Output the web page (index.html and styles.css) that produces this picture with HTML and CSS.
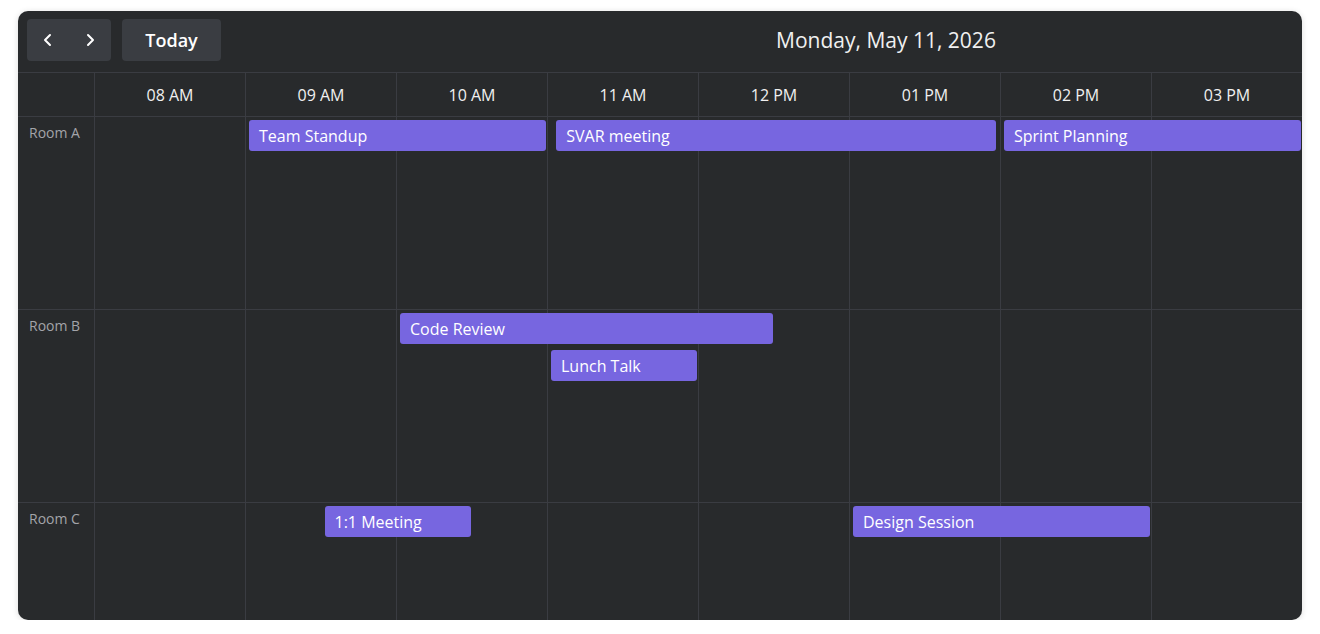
FILE: index.html
```html
<!DOCTYPE html>
<html lang="en">
<head>
  <meta charset="UTF-8">
  <meta name="viewport" content="width=device-width, initial-scale=1.0">
  <title>Room Timeline</title>
  <link rel="stylesheet" href="styles.css">
</head>
<body>
  <section class="scheduler">
    <div class="toolbar">
      <div class="nav-group">
        <button class="nav-btn" title="Previous day">
          <svg width="12" height="14" viewBox="0 0 12 14"><path d="M8 2 L3 7 L8 12" fill="none" stroke="#fff" stroke-width="2" stroke-linecap="round" stroke-linejoin="round"/></svg>
        </button>
        <button class="nav-btn" title="Next day">
          <svg width="12" height="14" viewBox="0 0 12 14"><path d="M4 2 L9 7 L4 12" fill="none" stroke="#fff" stroke-width="2" stroke-linecap="round" stroke-linejoin="round"/></svg>
        </button>
      </div>
      <button class="today-btn">Today</button>
      <div class="date-title">Monday, May 11, 2026</div>
    </div>

    <div class="timeline">
      <div class="head-row">
        <div class="corner"></div>
        <div class="hour">08 AM</div>
        <div class="hour">09 AM</div>
        <div class="hour">10 AM</div>
        <div class="hour">11 AM</div>
        <div class="hour">12 PM</div>
        <div class="hour">01 PM</div>
        <div class="hour">02 PM</div>
        <div class="hour">03 PM</div>
      </div>

      <div class="body">
        <!-- start / end are hours of the day, lane is the stacking row -->
        <div class="room-row">
          <div class="room-name">Room A</div>
          <div class="cells">
            <div class="cell"></div><div class="cell"></div><div class="cell"></div><div class="cell"></div>
            <div class="cell"></div><div class="cell"></div><div class="cell"></div><div class="cell"></div>
            <div class="event" style="--start:9; --end:11; --lane:0">Team Standup</div>
            <div class="event" style="--start:11.035; --end:13.98; --lane:0">SVAR meeting</div>
            <div class="event" style="--start:14; --end:16; --lane:0">Sprint Planning</div>
          </div>
        </div>

        <div class="room-row">
          <div class="room-name">Room B</div>
          <div class="cells">
            <div class="cell"></div><div class="cell"></div><div class="cell"></div><div class="cell"></div>
            <div class="cell"></div><div class="cell"></div><div class="cell"></div><div class="cell"></div>
            <div class="event" style="--start:10; --end:12.5; --lane:0">Code Review</div>
            <div class="event" style="--start:11; --end:12; --lane:1">Lunch Talk</div>
          </div>
        </div>

        <div class="room-row">
          <div class="room-name">Room C</div>
          <div class="cells">
            <div class="cell"></div><div class="cell"></div><div class="cell"></div><div class="cell"></div>
            <div class="cell"></div><div class="cell"></div><div class="cell"></div><div class="cell"></div>
            <div class="event" style="--start:9.5; --end:10.5; --lane:0">1:1 Meeting</div>
            <div class="event" style="--start:13; --end:15; --lane:0">Design Session</div>
          </div>
        </div>
      </div>
    </div>
  </section>
</body>
</html>
```

FILE: styles.css
```css
body {
  font-family: "Open Sans", "Noto Sans", sans-serif;
  margin: 0;
  padding: 11px 18px 0 18px;
  background: #fff;
}

.scheduler {
  width: 1284px;
  height: 609px;
  background: #282a2c;
  border-radius: 10px;
  box-shadow: 0 1px 6px rgba(0,0,0,0.14);
  overflow: hidden;
  display: flex;
  flex-direction: column;
  color: #ececec;
}

/* Toolbar */
.toolbar {
  display: flex;
  align-items: center;
  padding: 8px 9px 11px 9px;
  border-bottom: 1px solid #3a3c42;
}

.nav-group {
  display: flex;
  height: 42px;
  width: 84px;
  background: #3a3d42;
  border-radius: 4px;
}

.nav-btn {
  flex: 1;
  background: none;
  border: none;
  padding: 0;
  display: flex;
  align-items: center;
  justify-content: center;
  cursor: pointer;
}

.today-btn {
  margin-left: 11px;
  height: 42px;
  width: 99px;
  background: #3a3d42;
  border: none;
  border-radius: 4px;
  color: #fff;
  font-family: inherit;
  font-size: 18px;
  font-weight: 600;
  cursor: pointer;
}

.date-title {
  flex: 1;
  text-align: center;
  padding-left: 258px;
  font-size: 21px;
  color: #f0f0f0;
}

/* Grid */
.timeline {
  flex: 1;
  display: flex;
  flex-direction: column;
  overflow: hidden;
}

.head-row {
  display: grid;
  grid-template-columns: 77px repeat(8, 151px);
  height: 43px;
  border-bottom: 1px solid #3a3c42;
  flex-shrink: 0;
}

.corner,
.hour {
  border-right: 1px solid #3a3c42;
}

.hour {
  display: flex;
  align-items: center;
  justify-content: center;
  font-size: 16px;
  font-weight: 500;
  color: #f0f0f0;
}

.body {
  flex: 1;
  overflow: hidden;
}

.room-row {
  display: grid;
  grid-template-columns: 77px 1208px;
  height: 193px;
  border-bottom: 1px solid #3a3c42;
  box-sizing: border-box;
}

.room-name {
  padding: 6px 0 0 11px;
  font-size: 14px;
  color: #a3a4a9;
  border-right: 1px solid #3a3c42;
}

.cells {
  position: relative;
  display: grid;
  grid-template-columns: repeat(8, 151px);
}

.cell {
  border-right: 1px solid #3a3c42;
}

/* Events */
.event {
  position: absolute;
  left: calc((var(--start) - 8) * 151px + 3px);
  width: calc((var(--end) - var(--start)) * 151px - 5px);
  top: calc(var(--lane) * 37px + 3px);
  height: 31px;
  box-sizing: border-box;
  padding: 0 10px;
  display: flex;
  align-items: center;
  background: #7766e0;
  border-radius: 3px;
  color: #fff;
  font-size: 16px;
  white-space: nowrap;
  overflow: hidden;
}
```
